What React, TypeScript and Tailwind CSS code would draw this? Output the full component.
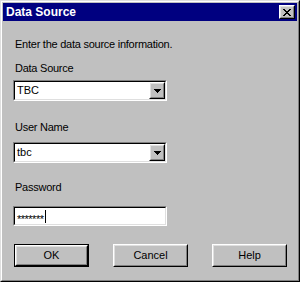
const CloseGlyph = () => {
  // win95 close "X", drawn pixel by pixel
  const rows = ["11000011", "01100110", "00111100", "00011000", "00111100", "01100110", "11000011"];
  return (
    <svg width="8" height="7" viewBox="0 0 8 7" shapeRendering="crispEdges">
      {rows.map((r, y) =>
        r.split("").map((c, x) => (c === "1" ? <rect key={`${x}-${y}`} x={x} y={y} width="1" height="1" fill="#000" /> : null))
      )}
    </svg>
  );
};

const Raised = ({ children, className = "" }: { children?: React.ReactNode; className?: string }) => (
  <div className={`border border-t-white border-l-white border-r-black border-b-black ${className}`}>
    <div className="h-full w-full border border-t-[#dfdfdf] border-l-[#dfdfdf] border-r-[#808080] border-b-[#808080] flex items-center justify-center bg-[#c0c0c0]">
      {children}
    </div>
  </div>
);

const Sunken = ({ children, className = "" }: { children?: React.ReactNode; className?: string }) => (
  <div className={`border border-t-[#808080] border-l-[#808080] border-r-white border-b-white ${className}`}>
    <div className="h-full w-full border border-t-black border-l-black border-r-[#dfdfdf] border-b-[#dfdfdf] bg-white flex items-center">
      {children}
    </div>
  </div>
);

const Combo = ({ value }: { value: string }) => (
  <Sunken className="w-[154px] h-[21px] ml-[10px]">
    <span className="flex-1 pl-[2px] text-[11px] leading-none">{value}</span>
    <Raised className="w-[16px] h-[17px]">
      <svg width="7" height="4" viewBox="0 0 7 4" shapeRendering="crispEdges">
        <path d="M0 0h7v1h-1v1h-1v1h-1v1h-1v-1h-1v-1h-1v-1h-1z" fill="#000" />
      </svg>
    </Raised>
  </Sunken>
);

const Label = ({ text, className = "" }: { text: string; className?: string }) => (
  <div className={`ml-[12px] text-[11px] leading-[12px] tracking-[-0.25px] ${className}`}>{text}</div>
);

const App = () => {
  return (
    <div className="w-[300px] h-[282px] bg-[#c0c0c0] border border-t-[#dfdfdf] border-l-[#dfdfdf] border-r-black border-b-black font-['Liberation_Sans',Arial,sans-serif] text-black">
      <div className="h-full border border-t-white border-l-white border-r-[#808080] border-b-[#808080] p-px flex flex-col">
        <div className="h-[18px] bg-[#000080] flex items-center justify-between pl-[3px] pr-[2px]">
          <span className="text-white font-bold text-[12px] leading-none">Data Source</span>
          <Raised className="w-[16px] h-[14px]">
            <CloseGlyph />
          </Raised>
        </div>

        <div className="flex flex-col">
          <Label text="Enter the data source information." className="mt-[17px]" />

          <Label text="Data Source" className="mt-[12px]" />
          <div className="mt-[6px]">
            <Combo value="TBC" />
          </div>

          <Label text="User Name" className="mt-[20px]" />
          <div className="mt-[9px]">
            <Combo value="tbc" />
          </div>

          <Label text="Password" className="mt-[18px]" />
          <Sunken className="w-[154px] h-[20px] ml-[10px] mt-[13px]">
            <span className="pl-[2px] text-[11px] leading-none translate-y-[3px] tracking-[-0.5px]">*******</span>
            <span className="ml-[2px] w-px h-[13px] bg-black" />
          </Sunken>

          <div className="flex mt-[18px] ml-[11px] text-[11px]">
            <div className="w-[75px] h-[23px] border border-black">
              <Raised className="h-full">OK</Raised>
            </div>
            <Raised className="w-[75px] h-[23px] ml-[24px]">Cancel</Raised>
            <Raised className="w-[75px] h-[23px] ml-[24px]">Help</Raised>
          </div>
        </div>
      </div>
    </div>
  );
};

export default App;
